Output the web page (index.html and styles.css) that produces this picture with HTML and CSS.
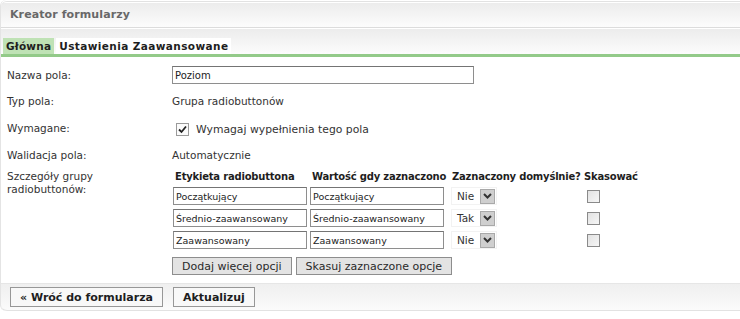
FILE: index.html
```html
<!DOCTYPE html>
<html lang="pl">
<head>
  <meta charset="UTF-8" />
  <title>Kreator formularzy</title>
  <link rel="stylesheet" href="styles.css">
</head>
<body>
  <div class="panel">
    <!-- Header -->
    <div class="panel-head">Kreator formularzy</div>

    <!-- Tabs -->
    <div class="tabs">
      <span class="tab active">Główna</span>
      <span class="tab">Ustawienia Zaawansowane</span>
    </div>

    <!-- Main form -->
    <div class="form">
      <div class="row row-name">
        <span class="label">Nazwa pola:</span>
        <div class="field"><input class="text text-wide" type="text" value="Poziom" /></div>
      </div>
      <div class="row row-type">
        <span class="label">Typ pola:</span>
        <div class="field">Grupa radiobuttonów</div>
      </div>
      <div class="row row-req">
        <span class="label">Wymagane:</span>
        <div class="field">
          <label class="check">
            <span class="box box-white">
              <svg width="9" height="9" viewBox="0 0 9 9"><path d="M1 4.5 L3.5 7 L8 1.5" fill="none" stroke="#222" stroke-width="1.8"/></svg>
            </span>
            Wymagaj wypełnienia tego pola
          </label>
        </div>
      </div>
      <div class="row row-valid">
        <span class="label">Walidacja pola:</span>
        <div class="field">Automatycznie</div>
      </div>
      <div class="row row-details">
        <span class="label label-top">Szczegóły grupy<br>radiobuttonów:</span>
        <div class="field">
          <div class="options">
            <div class="th">Etykieta radiobuttona</div>
            <div class="th">Wartość gdy zaznaczono</div>
            <div class="th">Zaznaczony domyślnie?</div>
            <div class="th">Skasować</div>

            <input class="text text-opt" type="text" value="Początkujący" />
            <input class="text text-opt" type="text" value="Początkujący" />
            <div class="select"><span class="select-val">Nie</span><span class="select-arrow"><svg width="9" height="6" viewBox="0 0 9 6"><path d="M1 1 L4.5 4.5 L8 1" fill="none" stroke="#333" stroke-width="2"/></svg></span></div>
            <span class="box box-gray"></span>

            <input class="text text-opt" type="text" value="Średnio-zaawansowany" />
            <input class="text text-opt" type="text" value="Średnio-zaawansowany" />
            <div class="select"><span class="select-val">Tak</span><span class="select-arrow"><svg width="9" height="6" viewBox="0 0 9 6"><path d="M1 1 L4.5 4.5 L8 1" fill="none" stroke="#333" stroke-width="2"/></svg></span></div>
            <span class="box box-gray"></span>

            <input class="text text-opt" type="text" value="Zaawansowany" />
            <input class="text text-opt" type="text" value="Zaawansowany" />
            <div class="select"><span class="select-val">Nie</span><span class="select-arrow"><svg width="9" height="6" viewBox="0 0 9 6"><path d="M1 1 L4.5 4.5 L8 1" fill="none" stroke="#333" stroke-width="2"/></svg></span></div>
            <span class="box box-gray"></span>
          </div>
          <div class="actions">
            <button class="btn">Dodaj więcej opcji</button>
            <button class="btn">Skasuj zaznaczone opcje</button>
          </div>
        </div>
      </div>
    </div>

    <!-- Footer -->
    <div class="panel-foot">
      <button class="btn btn-foot">« Wróć do formularza</button>
      <button class="btn btn-foot">Aktualizuj</button>
    </div>
  </div>
</body>
</html>
```

FILE: styles.css
```css
/* Reset */
* {
  margin: 0;
  padding: 0;
  box-sizing: border-box;
}
body {
  font-family: Verdana, 'DejaVu Sans', sans-serif;
  font-size: 10.5px;
  color: #333;
  background: #fff;
}
/* Panel */
.panel {
  padding-top: 1px;
  border-left: 1px solid #e4e4e4;
  border-radius: 6px 0 0 6px;
}
.panel-head {
  height: 27px;
  display: flex;
  align-items: center;
  padding-left: 9px;
  border-top: 1px solid #e2e2e2;
  border-bottom: 1px solid #dcdcdc;
  border-top-left-radius: 6px;
  background: linear-gradient(#fff 0 1px, #ececec 1px, #fcfcfc 100%);
  font-size: 11px;
  font-weight: bold;
  letter-spacing: 0.1px;
  color: #686868;
}
/* Tabs */
.tabs {
  height: 29px;
  display: flex;
  align-items: flex-end;
  gap: 2px;
  padding-left: 2px;
  border-bottom: 3px solid #93ca89;
  background: linear-gradient(#fff 0 1px, #ececec 1px, #fcfcfc 100%);
}
.tab {
  height: 16px;
  line-height: 16px;
  padding: 0 3px;
  background: #fff;
  font-size: 10.5px;
  font-weight: bold;
  letter-spacing: 0.4px;
  color: #1e1e1e;
}
.tab.active {
  background: #bfe2b5;
  letter-spacing: 0.2px;
}
/* Form rows */
.form {
  padding: 7px 0 0 6px;
}
.row {
  display: flex;
  align-items: center;
}
.row-name { height: 22px; }
.row-type { height: 30px; }
.row-req { height: 24px; }
.row-valid { height: 30px; }
.row-details { align-items: flex-start; }
.label {
  width: 165px;
  flex-shrink: 0;
}
.label-top {
  line-height: 13px;
}
.field {
  flex: 1;
}
.text {
  height: 18px;
  border: 1px solid #8e8e8e;
  border-top-color: #747474;
  padding: 0 2px;
  font-family: 'DejaVu Sans', sans-serif;
  font-size: 10px;
  color: #222;
  background: #fff;
  outline: none;
}
.text-wide { width: 302px; }
.text-opt { width: 134px; font-size: 9.5px; }
/* Checkbox */
.check {
  display: flex;
  align-items: center;
  gap: 7px;
  margin: 2px 0 0 4px;
  font-size: 10.8px;
}
.box {
  width: 13px;
  height: 13px;
  display: flex;
  align-items: center;
  justify-content: center;
  border: 1px solid #8a8a8a;
}
.box-white {
  background: #fbfbfb;
  border-color: #9a9a9a;
}
.box-gray {
  margin-left: 3px;
  background: linear-gradient(135deg, #e2e2e2, #f6f6f6);
}
/* Options table */
.options {
  display: grid;
  grid-template-columns: 137px 141px 133px auto;
  row-gap: 4px;
  align-items: center;
  margin-left: 1px;
}
.th {
  height: 13px;
  line-height: 13px;
  padding-left: 2px;
  font-size: 10px;
  font-weight: bold;
  letter-spacing: -0.2px;
  color: #1e1e1e;
  white-space: nowrap;
}
.options .th:nth-child(3) { padding-left: 1px; }
.options .th:nth-child(4) { padding-left: 0; }
.select {
  width: 46px;
  height: 18px;
  display: flex;
  align-items: center;
  justify-content: space-between;
  padding: 0 1px 0 5px;
  border: 1px solid #f2f2f2;
  background: #fff;
  font-size: 10.5px;
}
.select-arrow {
  width: 15px;
  height: 15px;
  display: flex;
  align-items: center;
  justify-content: center;
  border: 1px solid #a9a9a9;
  background: #cfcfcf;
}
/* Buttons */
.actions {
  display: flex;
  gap: 4px;
  margin-top: 8px;
}
.btn {
  height: 18px;
  padding: 0 9px;
  border: 1px solid #8d8d8d;
  background: #e3e3e3;
  font-family: Verdana, 'DejaVu Sans', sans-serif;
  font-size: 11px;
  color: #2a2a2a;
}
/* Footer */
.panel-foot {
  height: 28px;
  display: flex;
  align-items: center;
  gap: 10px;
  margin-top: 8px;
  padding-left: 9px;
  border-top: 1px solid #e6e6e6;
  border-bottom: 1px solid #e2e2e2;
  border-bottom-left-radius: 6px;
  background: linear-gradient(#efefef, #fbfbfb);
}
.btn-foot {
  height: 20px;
  padding: 0 9px;
  border-color: #979797;
  background: #f8f8f8;
  font-weight: bold;
  color: #1e1e1e;
}
```
